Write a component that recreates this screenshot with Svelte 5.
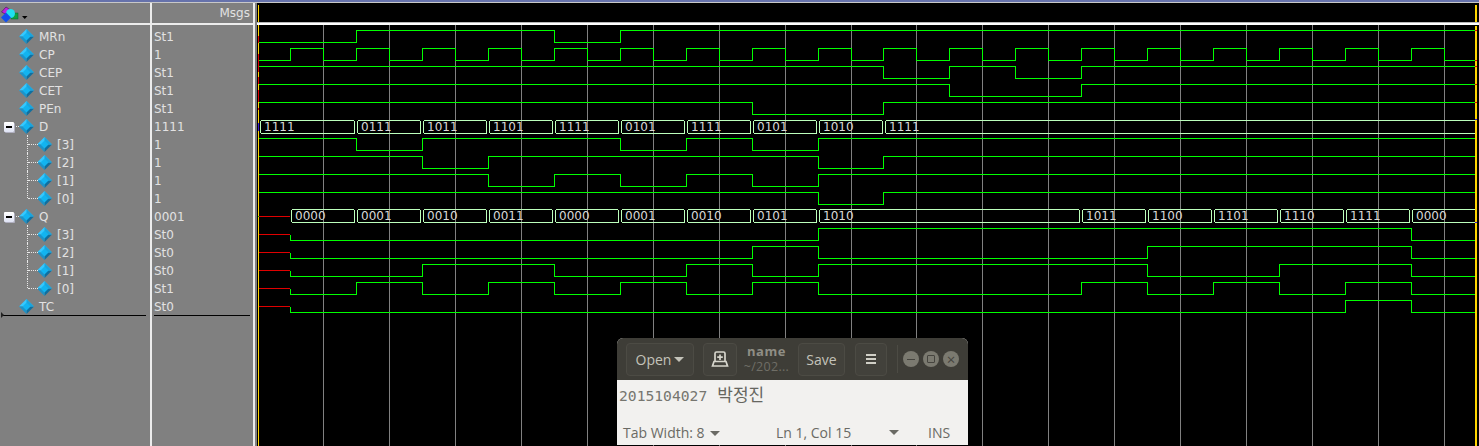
<script lang="ts">
	const END = 1475;

	const rows = [
		{ name: 'MRn', value: 'St1' },
		{ name: 'CP', value: '1' },
		{ name: 'CEP', value: 'St1' },
		{ name: 'CET', value: 'St1' },
		{ name: 'PEn', value: 'St1' },
		{ name: 'D', value: '1111', box: true },
		{ name: '[3]', value: '1', child: true },
		{ name: '[2]', value: '1', child: true },
		{ name: '[1]', value: '1', child: true },
		{ name: '[0]', value: '1', child: true, last: true },
		{ name: 'Q', value: '0001', box: true },
		{ name: '[3]', value: 'St0', child: true },
		{ name: '[2]', value: 'St0', child: true },
		{ name: '[1]', value: 'St0', child: true },
		{ name: '[0]', value: 'St1', child: true, last: true },
		{ name: 'TC', value: 'St0' }
	];

	const gridLines = [323, 389, 455, 521, 587, 653, 719, 785, 851, 916, 982, 1048, 1114, 1180, 1246, 1312, 1378, 1444];

	// half clock edges, taken off the reference
	const clock = [
		290, 323, 356, 389, 422, 455, 488, 521, 554, 587, 620, 653, 686, 719, 752, 785, 818, 851, 883, 916, 949,
		982, 1015, 1048, 1081, 1114, 1147, 1180, 1213, 1246, 1279, 1312, 1345, 1378, 1411, 1444
	];

	// hi = y of the high level, low is 12px under it. edges toggle the level
	const signals = [
		{ hi: 30, high: false, edges: [356, 554, 620] },
		{ hi: 48, high: false, edges: clock },
		{ hi: 66, high: true, edges: [883, 949, 1015, 1081] },
		{ hi: 84, high: true, edges: [949, 1081] },
		{ hi: 102, high: true, edges: [752, 883] },
		{ hi: 138, high: true, edges: [356, 422, 620, 686, 752, 818] },
		{ hi: 156, high: true, edges: [422, 488, 818, 883] },
		{ hi: 174, high: true, edges: [488, 554, 620, 686, 752, 818] },
		{ hi: 192, high: true, edges: [818, 883] },
		{ hi: 228, high: false, from: 290, edges: [818, 1411] },
		{ hi: 246, high: false, from: 290, edges: [752, 818, 1147, 1411] },
		{ hi: 264, high: false, from: 290, edges: [422, 554, 686, 752, 818, 1147, 1279, 1411] },
		{ hi: 282, high: false, from: 290, edges: [356, 422, 488, 554, 620, 686, 752, 818, 1081, 1147, 1213, 1279, 1345, 1411] },
		{ hi: 300, high: false, from: 290, edges: [1345, 1411] }
	];

	function wavePath(s: any) {
		let high = s.high;
		const y = () => (high ? s.hi : s.hi + 12) + 0.5;
		// signals that leave the unknown state step down from the red stub
		let d = s.from ? `M${s.from + 0.5} ${s.hi + 6.5}V${y()}` : `M259 ${y()}`;
		for (const x of s.edges) {
			d += `H${x + 0.5}`;
			high = !high;
			d += `V${y()}`;
		}
		return d + `H${END}`;
	}

	const buses = [
		{
			top: 120,
			bottom: 133,
			segs: [
				[259, '1111'], [356, '0111'], [422, '1011'], [488, '1101'], [554, '1111'],
				[620, '0101'], [686, '1111'], [752, '0101'], [818, '1010'], [884, '1111']
			]
		},
		{
			top: 209,
			bottom: 222,
			segs: [
				[290, '0000'], [356, '0001'], [422, '0010'], [488, '0011'], [554, '0000'],
				[620, '0001'], [686, '0010'], [752, '0101'], [818, '1010'], [1081, '1011'],
				[1147, '1100'], [1213, '1101'], [1279, '1110'], [1345, '1111'], [1411, '0000']
			]
		}
	];

	function busPath(x: number, next: number, top: number, bottom: number, closed: boolean) {
		const t = top + 0.5;
		const b = bottom + 0.5;
		const left = `M${next} ${b}H${x + 2.5}L${x + 1.5} ${b - 1}V${t + 1}L${x + 2.5} ${t}H${next - 1.5}`;
		return left + (closed ? `L${next - 0.5} ${t + 1}V${b - 1}L${next - 1.5} ${b}` : `H${next}`);
	}

	const redStubs = [216, 234, 252, 270, 288, 306];
	const leftTicks = [[36, 43], [54, 72], [77, 84], [90, 102], [108, 110]];
	const rightTicks = [30, 60, 66, 84, 102];
</script>

<div class="sim">
	<div class="strip"></div>
	<div class="panes">
		<div class="col names">
			<div class="head">
				<svg class="logo" width="30" height="20" viewBox="0 3 30 20">
					<path d="M1.5 12L6 7L12 11L7 15Z" fill="#c020e0" stroke="#300040" stroke-width="0.5" />
					<rect x="11" y="13" width="7" height="6" fill="#10a040" stroke="#063" stroke-width="0.5" />
					<circle cx="10.5" cy="13.5" r="4.5" fill="#20e0f0" />
					<path d="M1 17.5L6 12.5L11 17.5L6 22.5Z" fill="#1050f0" />
					<path d="M22 16h5.5l-2.75 3z" fill="#000" />
				</svg>
			</div>
			<div class="rows">
				{#each rows as row}
					<div class="row" class:child={row.child}>
						{#if row.child}<span class="tree" class:last={row.last}></span>{/if}
						{#if row.box}<span class="tree-stub"></span><span class="box"></span>{/if}
						<svg class="diamond" width="15" height="15" viewBox="0 0 15 15">
							<path d="M7.5 0L15 7.5H0Z" fill="#35c8ff" />
							<path d="M15 7.5L7.5 15V7.5Z" fill="#0f6f9f" />
							<path d="M0 7.5L7.5 15V7.5Z" fill="#1d93c8" />
							<path d="M7.5 0L15 7.5H7.5Z" fill="#1aa4dc" />
							<path d="M7.5 3.5L11.5 7.5L7.5 11.5L3.5 7.5Z" fill="#12b4f0" />
						</svg>
						<span class="label">{row.name}</span>
					</div>
				{/each}
				<div class="cursor-rule"><span class="tri"></span></div>
			</div>
		</div>
		<div class="col msgs">
			<div class="head">Msgs</div>
			<div class="rows">
				{#each rows as row}
					<div class="row"><span class="label">{row.value}</span></div>
				{/each}
				<div class="cursor-rule"></div>
			</div>
		</div>
		<div class="wave">
			<svg width="1222" height="443" viewBox="257 3 1222 443" shape-rendering="crispEdges">
				<rect x="257" y="3" width="1222" height="443" fill="#000" />
				<rect x="257" y="22" width="1222" height="1" fill="#b8b8b8" />
				<rect x="257" y="23" width="1222" height="2" fill="#fff" />
				{#each gridLines as x}
					<rect {x} y="25" width="1" height="421" fill="#808080" />
				{/each}
				{#each signals as s}
					<path d={wavePath(s)} fill="none" stroke="#00ff00" stroke-width="1" />
				{/each}
				{#each redStubs as y}
					<rect x="259" {y} width="31" height="1" fill="#e00000" />
				{/each}
				{#each buses as bus}
					{#each bus.segs as seg, i}
						<path
							d={busPath(seg[0] as number, i + 1 < bus.segs.length ? (bus.segs[i + 1][0] as number) - 1 : END, bus.top, bus.bottom, i + 1 < bus.segs.length)}
							fill="none"
							stroke="#bcffbc"
						/>
						<text class="bus-text" shape-rendering="auto" x={(seg[0] as number) + 5} y={bus.bottom - 2}>{seg[1]}</text>
					{/each}
				{/each}
				<rect x="258" y="5" width="1" height="17" fill="#ffd400" />
				<rect x="258" y="25" width="1" height="421" fill="#ffd400" />
				<rect x="1475" y="5" width="2" height="17" fill="#ffd400" />
				<rect x="1475" y="26" width="2" height="420" fill="#ffd400" />
				{#each leftTicks as t}
					<rect x="258" y={t[0]} width="1" height={t[1] - t[0]} fill="#e00000" />
				{/each}
				<rect x="258" y="123" width="1" height="8" fill="#3a18d0" />
				<rect x="258" y="216" width="1" height="1" fill="#00c000" />
				{#each rightTicks as y}
					<rect x="1475" {y} width="2" height="1" fill="#e00000" />
				{/each}
				<rect x="1475" y="119" width="2" height="1" fill="#3a18d0" />
				<rect x="1475" y="222" width="2" height="1" fill="#3a18d0" />
			</svg>
		</div>
	</div>

	<div class="editor">
		<div class="titlebar">
			<div class="btn open">Open<span class="caret"></span></div>
			<div class="btn newtab">
				<svg width="18" height="16" viewBox="0 0 18 16" fill="none" stroke="#d6d5cc" stroke-width="1.7">
					<path d="M4 10V2.5Q4 1 5.5 1H12.5Q14 1 14 2.5V10" />
					<path d="M1.5 15L3 10.5H15L16.5 15Z" />
					<path d="M9 3.5V9M6.2 6.2H11.8" />
				</svg>
			</div>
			<div class="doc">
				<span class="doc-name">name</span>
				<span class="doc-path">~/202...</span>
			</div>
			<div class="btn save">Save</div>
			<div class="btn menu"><span></span><span></span><span></span></div>
			<div class="divider"></div>
			<div class="wm">
				<span class="circle"><i class="min"></i></span>
				<span class="circle"><i class="max"></i></span>
				<span class="circle close">×</span>
			</div>
		</div>
		<div class="body">
			<span class="num">2015104027</span><span class="kor">박정진</span>
		</div>
		<div class="status">
			<span class="tab">Tab Width: 8<span class="caret small"></span></span>
			<span class="pos">Ln 1, Col 15</span>
			<span class="caret small pos-caret"></span>
			<span class="ins">INS</span>
		</div>
	</div>
</div>

<style>
	:global(body) {
		margin: 0;
		background: #808080;
	}

	.sim {
		position: relative;
		width: 1479px;
		height: 446px;
		overflow: hidden;
		background: #808080;
		font-family: 'DejaVu Sans', sans-serif;
		font-size: 12px;
		color: #e2e2e2;
	}

	.strip {
		height: 3px;
		background: linear-gradient(#6672ab 0 2px, #c8c8c8 2px);
	}

	.panes {
		display: flex;
		height: 443px;
	}

	.col {
		box-sizing: border-box;
		border-right: 2px solid #ececec;
	}

	.names {
		width: 152px;
	}

	.msgs {
		width: 103px;
		margin-right: 2px;
	}

	.head {
		box-sizing: border-box;
		height: 22px;
		border-bottom: 2px solid #ececec;
	}

	.logo {
		display: block;
	}

	.msgs .head {
		text-align: right;
		padding: 3px 3px 0 0;
	}

	.rows {
		padding-top: 2px;
	}

	.row {
		position: relative;
		display: flex;
		align-items: center;
		gap: 5px;
		height: 18px;
		padding-left: 19px;
	}

	.row.child {
		padding-left: 37px;
	}

	.msgs .row {
		padding-left: 2px;
	}

	.label {
		padding-top: 2px;
	}

	.diamond {
		flex: none;
	}

	.box {
		position: absolute;
		left: 4px;
		top: 5px;
		box-sizing: border-box;
		width: 10px;
		height: 10px;
		background: linear-gradient(#fff, #dfe3f4);
		border-radius: 1px;
		box-shadow: 1px 1px 0 #b0b0c0;
	}

	.box::after {
		content: '';
		position: absolute;
		left: 2px;
		top: 4px;
		width: 6px;
		height: 2px;
		background: #000;
	}

	.tree-stub {
		position: absolute;
		left: 14px;
		top: 9px;
		width: 5px;
		border-top: 1px dotted #e8e8e8;
	}

	.tree {
		position: absolute;
		left: 27px;
		top: 0;
		width: 10px;
		height: 18px;
		border-left: 1px dotted #e8e8e8;
	}

	.tree.last {
		height: 9px;
	}

	.tree::after {
		content: '';
		position: absolute;
		left: 0;
		top: 9px;
		width: 10px;
		border-top: 1px dotted #e8e8e8;
	}

	.cursor-rule {
		position: relative;
		height: 1px;
		margin: 0 4px 0 2px;
		background: #000;
	}

	.msgs .cursor-rule {
		margin: 0 3px 0 2px;
	}

	.tri {
		position: absolute;
		left: -1px;
		top: -3px;
		border-left: 3px solid #222;
		border-top: 3px solid transparent;
		border-bottom: 3px solid transparent;
	}

	.wave {
		flex: 1;
		min-width: 0;
	}

	.wave svg {
		display: block;
	}

	.bus-text {
		fill: #d8d8d8;
		font-family: 'DejaVu Sans', sans-serif;
		font-size: 12px;
	}

	.editor {
		position: absolute;
		left: 617px;
		top: 338px;
		width: 351px;
		height: 107px;
		font-family: 'Open Sans', 'Noto Sans', sans-serif;
		background: #f2f1ef;
		border-radius: 6px 6px 0 0;
		overflow: hidden;
	}

	.titlebar {
		display: flex;
		align-items: center;
		height: 42px;
		padding: 0 0 0 9px;
		box-sizing: border-box;
		background: #3e3d37;
		color: #c4c3ba;
		font-size: 14px;
	}

	.btn {
		display: flex;
		align-items: center;
		justify-content: center;
		box-sizing: border-box;
		height: 33px;
		border: 1px solid #4c4b44;
		border-radius: 4px;
		background: #42413b;
	}

	.open {
		width: 68px;
		gap: 3px;
	}

	.newtab {
		width: 34px;
		margin-left: 9px;
	}

	.doc {
		display: flex;
		flex-direction: column;
		align-items: center;
		width: 61px;
		padding-right: 2px;
		box-sizing: border-box;
		line-height: 16px;
	}

	.doc-name {
		font-weight: 700;
		font-size: 13px;
		color: #8f8e85;
		letter-spacing: 0.5px;
	}

	.doc-path {
		font-size: 12.5px;
		color: #6f6e66;
		letter-spacing: 0.3px;
	}

	.save {
		width: 47px;
	}

	.menu {
		flex-direction: column;
		gap: 2px;
		width: 32px;
		margin-left: 10px;
	}

	.menu span {
		width: 10px;
		height: 2px;
		background: #d0cfc6;
	}

	.divider {
		width: 1px;
		height: 28px;
		margin-left: 10px;
		background: #4c4b44;
	}

	.wm {
		display: flex;
		gap: 4px;
		margin-left: 5px;
	}

	.circle {
		position: relative;
		display: flex;
		align-items: center;
		justify-content: center;
		width: 16px;
		height: 16px;
		border-radius: 50%;
		background: #7b7a70;
		color: #45443e;
		font-size: 15px;
		line-height: 1;
	}

	.min {
		width: 8px;
		height: 1px;
		background: #45443e;
	}

	.max {
		box-sizing: border-box;
		width: 8px;
		height: 8px;
		border: 1px solid #45443e;
		border-radius: 1px;
	}

	.caret {
		display: inline-block;
		width: 0;
		height: 0;
		border-left: 5px solid transparent;
		border-right: 5px solid transparent;
		border-top: 5px solid #c4c3ba;
	}

	.caret.small {
		border-top-color: #6a6a64;
		margin-left: 5px;
		vertical-align: 2px;
	}

	.body {
		display: flex;
		align-items: center;
		height: 29px;
		padding-left: 2px;
		color: #76766f;
	}

	.num {
		font-family: 'DejaVu Sans Mono', monospace;
		font-size: 14.67px;
		padding-top: 2px;
	}

	.kor {
		margin-left: 10px;
		font-family: 'Noto Sans CJK KR', sans-serif;
		font-size: 17px;
		color: #66665f;
		position: relative;
		top: -1px;
	}

	.status {
		display: flex;
		align-items: center;
		box-sizing: border-box;
		height: 36px;
		padding: 10px 0 0 6px;
		color: #6a6a64;
		font-size: 14px;
	}

	.tab {
		width: 153px;
	}

	.pos {
		width: 113px;
	}

	.pos-caret {
		margin: 0 !important;
	}

	.ins {
		margin-left: 29px;
	}
</style>
